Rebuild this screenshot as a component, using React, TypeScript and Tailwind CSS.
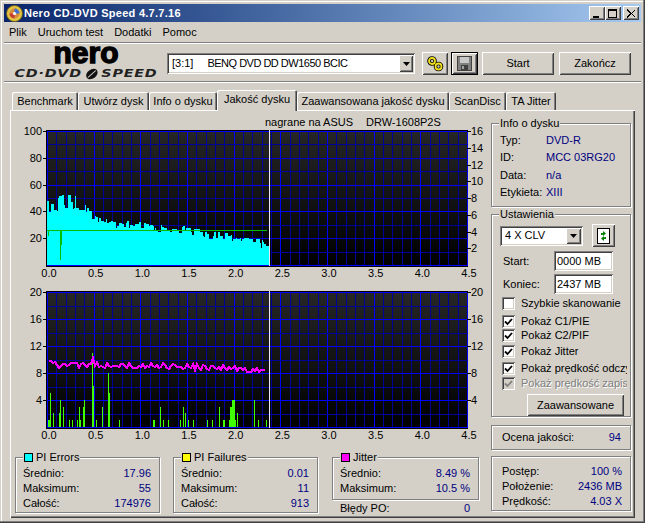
import type { ReactNode } from 'react';

const raised = 'shadow-[inset_1px_1px_0_#fff,inset_-1px_-1px_0_#404040,inset_2px_2px_0_#d4d0c8,inset_-2px_-2px_0_#808080]';
const sunken = 'shadow-[inset_1px_1px_0_#808080,inset_-1px_-1px_0_#fff,inset_2px_2px_0_#404040,inset_-2px_-2px_0_#d4d0c8]';

function noise(seed: number) {
  let s = seed;
  return () => {
    s = (s * 1103515245 + 12345) & 0x7fffffff;
    return s / 0x7fffffff;
  };
}

function lerp(points: number[][], x: number) {
  for (let i = 1; i < points.length; i++) {
    if (x <= points[i][0]) {
      const [x0, y0] = points[i - 1];
      const [x1, y1] = points[i];
      return y0 + ((y1 - y0) * (x - x0)) / (x1 - x0);
    }
  }
  return points[points.length - 1][1];
}

// top edge of the cyan bars, in page pixels
const piePoints = [[47, 196], [72, 194], [85, 200], [90, 208], [97, 214], [110, 220], [150, 222], [190, 226], [205, 230], [225, 232], [245, 237], [269, 240]];
const pieRand = noise(7);
const pieBars: { x: number; y: number; w: number }[] = [];
for (let x = 47; x < 269; ) {
  const w = 1 + Math.floor(pieRand() * 3);
  const spread = x < 95 ? 16 : 9;
  const y = Math.round(lerp(piePoints, x) + pieRand() * spread);
  pieBars.push({ x, y, w: Math.min(w, 269 - x) });
  x += w;
}

const jitterPoints = [[50, 365], [120, 365], [190, 367], [230, 368], [269, 371]];
const jitterRand = noise(23);
const jitterSteps: number[] = [];
for (let x = 49; x < 267; x += 2) {
  let y = Math.round(lerp(jitterPoints, x) + jitterRand() * 6 - 3);
  if (x < 53) y = 361;
  if (x === 93) y = 358;
  jitterSteps.push(x, y);
}
const jitterLine = jitterSteps.reduce((acc, v, i) => (i % 2 ? `${acc},${v} ` : acc + v), '');

// PI failures spikes: [x, value]
const pifSpikes = [
  [48, 1], [49, 1], [50, 5], [53, 2], [59, 2], [60, 4], [63, 3], [69, 1], [72, 1], [77, 1], [79, 3], [80, 1],
  [83, 3], [84, 4], [92, 11], [93, 6], [96, 1], [102, 3], [108, 8], [109, 5], [119, 1], [153, 1], [154, 1], [160, 3],
  [163, 1], [168, 1], [180, 1], [183, 3], [185, 2], [188, 1], [193, 1], [207, 1], [212, 1], [219, 3], [223, 1], [224, 1],
  [229, 1], [230, 3], [231, 3], [232, 4], [233, 4], [234, 4], [235, 1], [237, 2], [254, 4], [258, 1], [266, 1],
];

const xLabels = ['0.0', '0.5', '1.0', '1.5', '2.0', '2.5', '3.0', '3.5', '4.0', '4.5'];

function Chart({ id, viewY, viewH, top, bottom, bright, leftLabels, rightLabels, children }: {
  id: string;
  viewY: number;
  viewH: number;
  top: number;
  bottom: number;
  bright: number[];
  leftLabels: string[];
  rightLabels: string[];
  children: ReactNode;
}) {
  const h = bottom - top;
  return (
    <svg className="block w-[474px]" style={{ height: viewH }} viewBox={`11 ${viewY} 474 ${viewH}`} shapeRendering="crispEdges">
      <defs>
        <linearGradient id={id} x1="0" y1="0" x2="0" y2="1">
          <stop offset="0" stopColor="#262626" />
          <stop offset="1" stopColor="#000000" />
        </linearGradient>
      </defs>
      <rect x={46} y={top - 1} width={422} height={h + 3} fill="#000" />
      <rect x={47} y={top} width={420} height={h} fill={`url(#${id})`} />
      {Array.from({ length: 46 }, (_, i) => (
        <rect key={i} x={Math.round(47 + (i * 420) / 45)} y={top} width={1} height={h} fill={i % 5 === 0 ? '#0000ff' : '#000099'} />
      ))}
      {Array.from({ length: 11 }, (_, i) => (
        <rect key={i} x={47} y={Math.round(top + (i * h) / 10)} width={421} height={1} fill={bright.includes(i) ? '#0000ff' : i % 2 === 0 ? '#0000cc' : '#000099'} />
      ))}
      {children}
      <rect x={269} y={top - 1} width={1} height={h + 2} fill="#e8e8f8" />
      {leftLabels.map((t, i) => {
        const y = Math.round(top + (i * h) / leftLabels.length);
        return (
          <g key={t}>
            <rect x={43} y={y} width={4} height={1} fill="#000" />
            <text x={42} y={y + 4} textAnchor="end" fontSize={11} fill="#000" shapeRendering="auto">{t}</text>
          </g>
        );
      })}
      {rightLabels.map((t, i) => {
        const y = Math.round(top + (i * h) / rightLabels.length);
        return (
          <g key={t}>
            <rect x={467} y={y} width={4} height={1} fill="#000" />
            <text x={471} y={y + 4} fontSize={11} fill="#000" shapeRendering="auto">{t}</text>
          </g>
        );
      })}
      {xLabels.map((t, i) => (
        <text key={t} x={49 + (i * 420) / 9} y={bottom + 12} textAnchor="middle" fontSize={11} fill="#000">{t}</text>
      ))}
    </svg>
  );
}

function GroupBox({ title, swatch, className, children }: { title: string; swatch?: string; className: string; children: ReactNode }) {
  return (
    <div className={`relative border border-[#808080] shadow-[inset_1px_1px_0_#fff,1px_1px_0_#fff] ${className}`}>
      {title && (
        <div className="absolute left-[7px] top-[-7px] flex items-center gap-[3px] bg-[#d4d0c8] px-[1px] leading-[13px]">
          {swatch && <span className={`h-[9px] w-[9px] border border-black ${swatch}`} />}
          {title}
        </div>
      )}
      {children}
    </div>
  );
}

function StatRow({ label, value }: { label: string; value: string }) {
  return (
    <div className="flex h-[15px] items-center justify-between">
      <span>{label}</span>
      <span className="text-[#000080]">{value}</span>
    </div>
  );
}

function Stats({ title, swatch, className, rows }: { title: string; swatch: string; className: string; rows: string[][] }) {
  return (
    <GroupBox title={title} swatch={swatch} className={`pl-[7px] pr-[8px] pt-[8px] ${className}`}>
      {rows.map(([l, v]) => <StatRow key={l} label={l} value={v} />)}
    </GroupBox>
  );
}

function Check({ label, checked = true, disabled = false, className = '' }: { label: string; checked?: boolean; disabled?: boolean; className?: string }) {
  return (
    <div className={`flex items-center whitespace-nowrap ${className}`}>
      <span className={`relative h-[13px] w-[13px] shrink-0 shadow-[inset_1px_1px_0_#808080,inset_-1px_-1px_0_#fff,inset_2px_2px_0_#404040,inset_-2px_-2px_0_#d4d0c8] ${disabled ? 'bg-[#d4d0c8]' : 'bg-white'}`}>
        {checked && (
          <svg className="absolute left-0 top-0" width="13" height="13" viewBox="0 0 13 13">
            <path d="M3 6.5l2.5 2.5 4.5-5" fill="none" stroke={disabled ? '#808080' : '#000'} strokeWidth="1.8" />
          </svg>
        )}
      </span>
      <span className={`ml-[6px] ${disabled ? 'text-[#808080] [text-shadow:1px_1px_0_#fff]' : ''}`}>{label}</span>
    </div>
  );
}

function TitleButton({ className = '', children }: { className?: string; children: ReactNode }) {
  return (
    <div className={`flex h-[14px] w-[16px] items-center justify-center bg-[#d4d0c8] ${raised} ${className}`}>
      <svg width="10" height="9" viewBox="0 0 10 9" shapeRendering="crispEdges">{children}</svg>
    </div>
  );
}

function Tab({ label, width, active = false }: { label: string; width: string; active?: boolean }) {
  return (
    <div className={`flex items-center justify-center whitespace-nowrap rounded-t-[2px] bg-[#d4d0c8] shadow-[inset_1px_1px_0_#fff,inset_-1px_0_0_#404040,inset_-2px_0_0_#808080] ${width} ${active ? 'relative z-10 mb-[-1px] h-[21px] pb-[3px]' : 'h-[18px]'}`}>
      {label}
    </div>
  );
}

export default function App() {
  return (
    <div className={`flex h-[523px] w-[645px] flex-col overflow-hidden bg-[#d4d0c8] p-[4px] font-['Liberation_Sans',Arial,sans-serif] text-[11px] text-black shadow-[inset_-1px_-1px_0_#404040,inset_-2px_-2px_0_#808080,inset_1px_1px_0_#d4d0c8,inset_2px_2px_0_#fff]`}>
      {/* title bar */}
      <div className="flex h-[18px] shrink-0 items-center bg-gradient-to-r from-[#0a246a] to-[#a6caf0] pl-[2px] pr-[2px]">
        <svg width="17" height="17" viewBox="0 0 17 17">
          <circle cx="8.5" cy="8.5" r="8" fill="#e2c33f" stroke="#6b5a10" strokeWidth="0.8" />
          <circle cx="8.5" cy="8.5" r="5" fill="#d88a40" />
          <path d="M8.5 3.5a5 5 0 0 1 5 5h-5z" fill="#3f6fd0" />
          <path d="M3.5 8.5a5 5 0 0 0 5 5v-5z" fill="#c83a30" />
          <circle cx="8.5" cy="8.5" r="1.6" fill="#fff" />
        </svg>
        <span className="ml-[1px] text-[11px] font-bold tracking-[0.27px] text-white">Nero CD-DVD Speed 4.7.7.16</span>
        <div className="ml-auto flex">
          <TitleButton><rect x="1" y="7" width="6" height="2" fill="#000" /></TitleButton>
          <TitleButton><path d="M0 0h9v2H0zM0 2h1v7H0zM8 2h1v7H8zM0 8h9v1H0z" fill="#000" /></TitleButton>
          <TitleButton className="ml-[2px]"><path d="M1 0l4 4 4-4v1L6 4.500l3 3.500v1L5 5 1 9V8l3-3.500L1 1z" fill="#000" /></TitleButton>
        </div>
      </div>

      {/* menu */}
      <div className="flex h-[20px] shrink-0 items-center gap-[11px] pl-[5px]">
        <span>Plik</span>
        <span>Uruchom test</span>
        <span>Dodatki</span>
        <span>Pomoc</span>
      </div>
      <div className="h-[2px] shrink-0 border-b border-t border-b-white border-t-[#808080]" />

      {/* toolbar */}
      <div className="flex h-[37px] shrink-0 items-start">
        <div className="ml-[9px] flex w-[146px] flex-col items-center">
          <div className="mt-[-1px] h-[20px] text-[30px] font-bold leading-[20px] [-webkit-text-stroke:1.4px_#000]">nero</div>
          <div className="mt-[4px] flex h-[13px] scale-x-[1.3] items-center font-['DejaVu_Sans',sans-serif] text-[11px] font-bold italic leading-[13px] tracking-[0.6px] text-[#222]">
            <span>CD·DVD</span>
            <svg className="mx-[1px]" width="13" height="12" viewBox="0 0 15 12">
              <ellipse cx="7.5" cy="6" rx="4.500" ry="6.500" transform="rotate(30 7.500 6)" fill="#111" />
              <path d="M4 10L11 2" stroke="#d4d0c8" strokeWidth="1" />
            </svg>
            <span>SPEED</span>
          </div>
        </div>
        <div className={`ml-[8px] mt-[9px] flex h-[21px] w-[248px] items-center bg-white pl-[5px] ${sunken}`}>
          <span>[3:1]</span>
          <span className="ml-[14px] tracking-[-0.5px]">BENQ DVD DD DW1650 BCIC</span>
          <div className={`ml-auto mr-[2px] flex h-[17px] w-[14px] items-center justify-center bg-[#d4d0c8] ${raised}`}>
            <svg width="7" height="4" viewBox="0 0 7 4"><path d="M0 0h7L3.500 4z" fill="#000" /></svg>
          </div>
        </div>
        <div className={`ml-[7px] mt-[8px] flex h-[23px] w-[26px] items-center justify-center ${raised}`}>
          <svg width="17" height="16" viewBox="0 0 17 16" fill="none">
            <g stroke="#000" strokeWidth="3.600">
              <circle cx="5" cy="5" r="3" />
              <circle cx="11.500" cy="10.500" r="3" />
            </g>
            <g stroke="#f2e020" strokeWidth="1.800">
              <circle cx="5" cy="5" r="3" />
              <circle cx="11.500" cy="10.500" r="3" />
            </g>
          </svg>
        </div>
        <div className={`ml-[3px] mt-[8px] flex h-[23px] w-[27px] items-center justify-center border border-black ${raised}`}>
          <svg width="15" height="15" viewBox="0 0 15 15" shapeRendering="crispEdges">
            <rect x="0" y="0" width="15" height="15" fill="#404040" />
            <rect x="1" y="1" width="13" height="13" fill="#808080" />
            <rect x="3" y="1" width="9" height="6" fill="#c8c8c8" />
            <rect x="4" y="9" width="7" height="5" fill="#404040" />
            <rect x="5" y="10" width="2" height="3" fill="#a0a0a0" />
          </svg>
        </div>
        <div className={`ml-[4px] mt-[8px] flex h-[23px] w-[72px] items-center justify-center ${raised}`}>Start</div>
        <div className={`ml-[5px] mt-[8px] flex h-[23px] w-[72px] items-center justify-center ${raised}`}>Zakończ</div>
      </div>
      <div className="h-[2px] shrink-0 border-b border-t border-b-white border-t-[#808080]" />

      {/* tabs */}
      <div className="flex h-[27px] shrink-0 items-end pl-[8px]">
        <Tab label="Benchmark" width="w-[66px]" />
        <Tab label="Utwórz dysk" width="w-[71px]" />
        <Tab label="Info o dysku" width="w-[68px]" />
        <Tab label="Jakość dysku" width="w-[80px]" active />
        <Tab label="Zaawansowana jakość dysku" width="w-[152px]" />
        <Tab label="ScanDisc" width="w-[57px]" />
        <Tab label="TA Jitter" width="w-[50px]" />
      </div>

      {/* tab page */}
      <div className="mx-[6px] flex h-[408px] shrink-0 bg-[#d4d0c8] pl-[1px] pt-[3px] shadow-[inset_1px_1px_0_#fff,inset_-1px_-1px_0_#404040,inset_-2px_-2px_0_#808080]">
        <div className="w-[474px] shrink-0">
          <Chart id="pie" viewY={113} viewH={172} top={131} bottom={265} bright={[0, 4, 6, 10]}
            leftLabels={['100', '80', '60', '40', '20']}
            rightLabels={['16', '14', '12', '10', '8', '6', '4', '2']}>
            {pieBars.map((b) => (
              <rect key={b.x} x={b.x} y={b.y} width={b.w} height={265 - b.y} fill="#00ffff" />
            ))}
            <rect x={47} y={230} width={220} height={1} fill="#00c000" />
            <rect x={48} y={230} width={1} height={6} fill="#00c000" />
            <rect x={60} y={230} width={1} height={30} fill="#00c000" />
            <rect x={61} y={230} width={1} height={15} fill="#00c000" />
            <text x={265} y={126} fontSize={11} fill="#000">nagrane na ASUS</text>
            <text x={366} y={126} fontSize={11} fill="#000">DRW-1608P2S</text>
          </Chart>
          <Chart id="jit" viewY={285} viewH={165} top={292} bottom={427} bright={[0, 2, 4, 6, 8, 10]}
            leftLabels={['20', '16', '12', '8', '4']}
            rightLabels={['20', '16', '12', '8', '4']}>
            {pifSpikes.map(([x, v]) => (
              <rect key={x} x={x} y={427 - Math.round(v * 6.75)} width={1} height={Math.round(v * 6.75)} fill="#40ff00" />
            ))}
            <polyline points={jitterLine} fill="none" stroke="#ff00ff" strokeWidth={2} />
          </Chart>
          <div className="ml-[4px] mt-[7px] flex items-start">
            <Stats title="PI Errors" swatch="bg-[#00ffff]" className="h-[56px] w-[145px]" rows={[['Średnio:', '17.96'], ['Maksimum:', '55'], ['Całość:', '174976']]} />
            <Stats title="PI Failures" swatch="bg-[#ffff00]" className="ml-[13px] h-[56px] w-[145px]" rows={[['Średnio:', '0.01'], ['Maksimum:', '11'], ['Całość:', '913']]} />
            <div className="ml-[14px] w-[147px]">
              <Stats title="Jitter" swatch="bg-[#ff00ff]" className="h-[43px]" rows={[['Średnio:', '8.49 %'], ['Maksimum:', '10.5 %']]} />
              <div className="mt-[1px] pl-[8px] pr-[9px]"><StatRow label="Błędy PO:" value="0" /></div>
            </div>
          </div>
        </div>

        <div className="ml-[6px] mt-[10px] w-[140px] shrink-0">
          <GroupBox title="Info o dysku" className="h-[84px] pl-[8px] pt-[7px]">
            {[['Typ:', 'DVD-R'], ['ID:', 'MCC 03RG20'], ['Data:', 'n/a'], ['Etykieta:', 'XIII']].map(([l, v]) => (
              <div key={l} className="flex h-[17.500px] items-center">
                <span className="w-[46px]">{l}</span>
                <span className="text-[#000080]">{v}</span>
              </div>
            ))}
          </GroupBox>

          <GroupBox title="Ustawienia" className="mt-[7px] h-[203px] pl-[8px]">
            <div className="mt-[9px] flex items-center">
              <div className={`flex h-[20px] w-[83px] items-center bg-white pl-[5px] ${sunken}`}>
                <span>4 X CLV</span>
                <div className={`ml-auto mr-[2px] flex h-[16px] w-[15px] items-center justify-center bg-[#d4d0c8] ${raised}`}>
                  <svg width="7" height="4" viewBox="0 0 7 4"><path d="M0 0h7L3.500 4z" fill="#000" /></svg>
                </div>
              </div>
              <div className={`ml-[9px] flex h-[23px] w-[23px] items-center justify-center ${raised}`}>
                <svg width="13" height="16" viewBox="0 0 13 16">
                  <rect x="0.500" y="0.500" width="12" height="15" fill="#fff" stroke="#000" />
                  <path d="M4 7V5h2V3l3 2.500L6 8V6.500H5.500V7z" fill="#008000" />
                  <path d="M9 9v2H7v2L4 10.500 7 8v1.500h.5V9z" fill="#008000" />
                </svg>
              </div>
            </div>
            <div className="mt-[4px] flex items-center">
              <span className="ml-[3px] w-[51px]">Start:</span>
              <div className={`flex h-[20px] w-[59px] items-center bg-white pl-[3px] ${sunken}`}>0000 MB</div>
            </div>
            <div className="mt-[3px] flex items-center">
              <span className="ml-[3px] w-[51px]">Koniec:</span>
              <div className={`flex h-[20px] w-[59px] items-center bg-white pl-[3px] ${sunken}`}>2437 MB</div>
            </div>
            <div className="w-[127px] overflow-hidden pl-[2px]">
              <Check label="Szybkie skanowanie" checked={false} className="mt-[2px] h-[15px]" />
              <Check label="Pokaż C1/PIE" className="mt-[3px] h-[15px]" />
              <Check label="Pokaż C2/PIF" className="mt-[-1px] h-[15px]" />
              <Check label="Pokaż Jitter" className="mt-[1px] h-[15px]" />
              <Check label="Pokaż prędkość odczytu" className="mt-[2px] h-[15px]" />
              <Check label="Pokaż prędkość zapisu" disabled className="h-[15px]" />
            </div>
            <div className={`ml-[27px] mt-[3px] flex h-[22px] w-[97px] items-center justify-center ${raised}`}>Zaawansowane</div>
          </GroupBox>

          <GroupBox title="" className="mt-[8px] h-[25px] pl-[10px] pr-[9px] pt-[4px]">
            <StatRow label="Ocena jakości:" value="94" />
          </GroupBox>

          <GroupBox title="" className="mt-[6px] h-[55px] pl-[10px] pr-[8px] pt-[7px]">
            <StatRow label="Postęp:" value="100 %" />
            <StatRow label="Położenie:" value="2436 MB" />
            <StatRow label="Prędkość:" value="4.03 X" />
          </GroupBox>
        </div>
      </div>
    </div>
  );
}
